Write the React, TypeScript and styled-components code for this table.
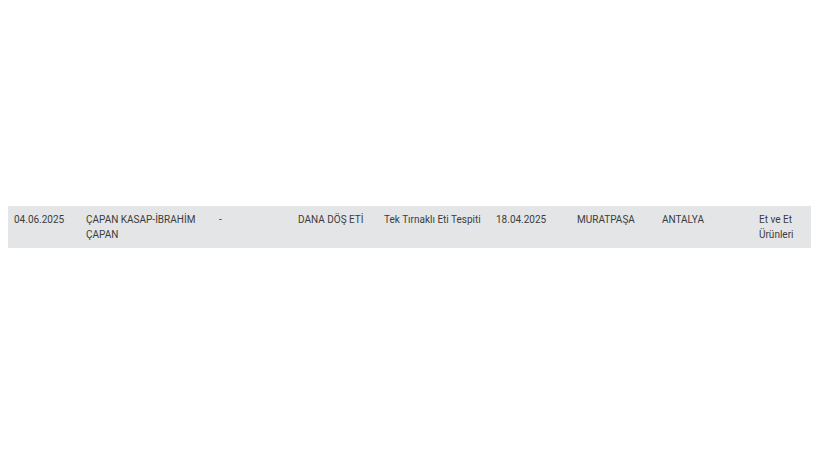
import styled, {createGlobalStyle} from "styled-components";

const GlobalStyle = createGlobalStyle`
    body {
        margin: 8px;
        background: #ffffff;
        font-family: Roboto, "Liberation Sans", Arial, sans-serif;
    }
`;

const Page = styled.div`
    padding-top: 198px;
`;

const Table = styled.table`
    width: 803px;
    border-collapse: collapse;
    table-layout: fixed;
`;

const Row = styled.tr`
    background: #e4e5e7;
`;

const Cell = styled.td<{$width: number}>`
    width: ${({$width}) => $width}px;
    padding: 6px 6px 6px;
    vertical-align: top;
    font-size: 10px;
    line-height: 15px;
    color: #3c3c3c;
    box-sizing: border-box;
`;

const cells: Array<[number, string]> = [
    [72, "04.06.2025"],
    [133, "ÇAPAN KASAP-İBRAHİM ÇAPAN"],
    [79, "-"],
    [86, "DANA DÖŞ ETİ"],
    [112, "Tek Tırnaklı Eti Tespiti"],
    [81, "18.04.2025"],
    [85, "MURATPAŞA"],
    [97, "ANTALYA"],
    [58, "Et ve Et Ürünleri"],
];

function App() {
    return (
        <>
            <GlobalStyle />
            <Page>
                <Table>
                    <tbody>
                        <Row>
                            {cells.map(([width, text], i) => (
                                <Cell key={i} $width={width}>
                                    {text}
                                </Cell>
                            ))}
                        </Row>
                    </tbody>
                </Table>
            </Page>
        </>
    );
}

export default App;
